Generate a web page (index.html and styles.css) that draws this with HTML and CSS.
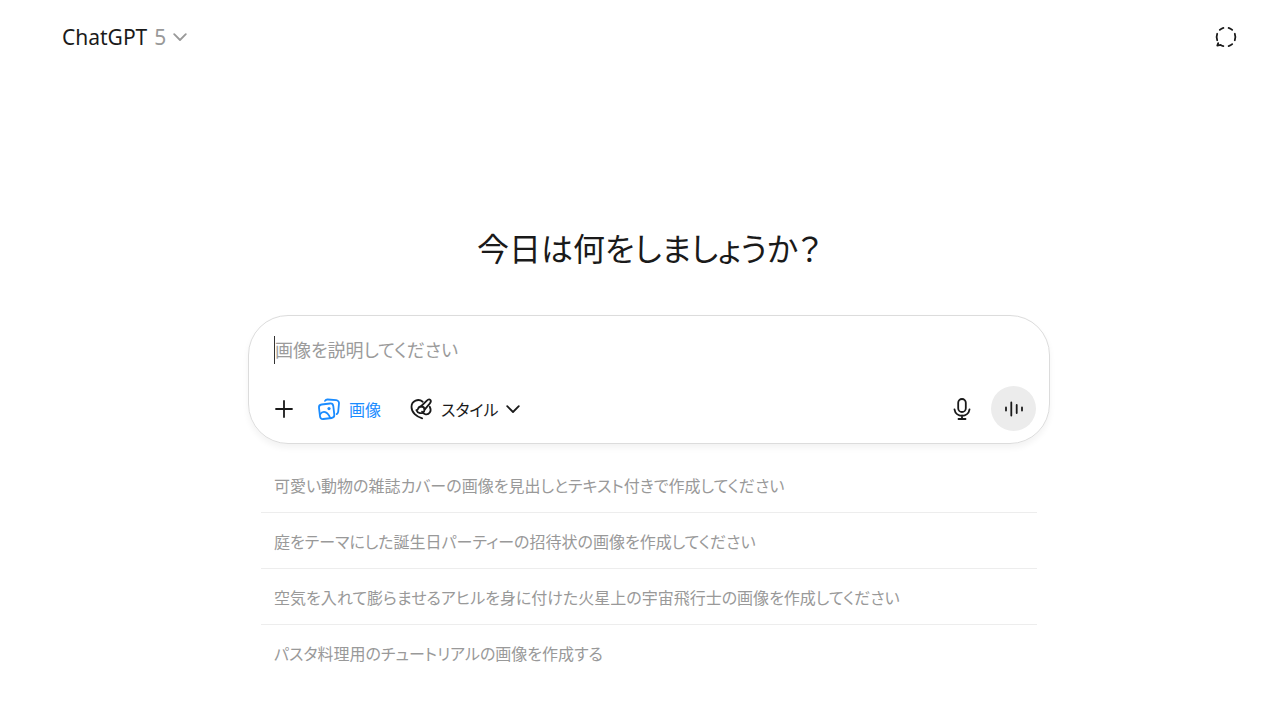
FILE: index.html
```html
<!DOCTYPE html>
<html lang="ja">
<head>
  <meta charset="UTF-8">
  <title>ChatGPT</title>
  <meta name="viewport" content="width=device-width, initial-scale=1.0">
  <link rel="stylesheet" href="styles.css">
</head>
<body>

  <header class="topbar">
    <button type="button" class="model-btn">
      <span>ChatGPT</span>
      <span class="model-version">5</span>
      <svg class="chevron" width="14" height="14" viewBox="0 0 14 14"><path d="M1.2 4.2 7 10l5.8-5.8"/></svg>
    </button>
    <button type="button" class="icon-btn" aria-label="一時チャット">
      <svg width="24" height="24" viewBox="0 0 24 24">
        <path d="M14.6 2.900a9.500 9.500 0 0 1 3.600 2M20.800 8.800a9.500 9.500 0 0 1 0 6.400M18.200 19.100a9.500 9.500 0 0 1-3.600 2M9.400 21.100a9.500 9.500 0 0 1-2.700-1.200l-3.400.7.900-2.500M3.200 15.200a9.500 9.500 0 0 1 0-6.400M5.800 4.900a9.500 9.500 0 0 1 3.600-2"/>
      </svg>
    </button>
  </header>

  <main>
    <h1>今日は何をしましょうか？</h1>

    <form class="composer">
      <div class="prompt">
        <span class="caret"></span>
        <input type="text" class="prompt-input" aria-label="画像の説明" placeholder="画像を説明してください">
      </div>
      <div class="tools">
        <button type="button" class="icon-btn" aria-label="追加">
          <svg width="18" height="18" viewBox="0 0 18 18"><path d="M9 1v16M1 9h16"/></svg>
        </button>
        <button type="button" class="tool-btn tool-image">
          <svg width="24" height="24" viewBox="0 0 24 24">
            <path d="M4.600 7.500 13 6.500a3 3 0 0 1 3.300 2.600l1 8.600a3 3 0 0 1-2.600 3.300l-8.400 1a3 3 0 0 1-3.300-2.600L2 10.800a3 3 0 0 1 2.600-3.300Z"/>
            <path d="M2.900 17.400c3-4 7.700-3.200 10.300 3.700"/>
            <path d="M8 3.900c.6-1 1.500-1.500 2.700-1.400l8.500.7a3 3 0 0 1 2.800 3.300l-.8 8.200c-.1 1.100-.6 1.900-1.500 2.400"/>
            <circle class="dot" cx="12" cy="11.600" r="1.600"/>
          </svg>
          <span>画像</span>
        </button>
        <button type="button" class="tool-btn">
          <svg width="24" height="24" viewBox="0 0 24 24">
            <path d="M13.200 21.300C7.500 19.700 2.500 15.500 2.500 9.900c0-6.400 7.100-8.700 11.200-5.200M20.800 9.800c2.300 4.500-.8 8.500-4.700 7.400-1.300-.4-2.300-1.300-3-2.600"/>
            <path d="m11.800 9.500 5.800-5.700c1.300-1.300 2.800-1.700 3.700-.9.900.9.500 2.400-.6 3.700l-5.100 6"/>
            <path d="M12 9.500c2 0 3.500 1.300 3.500 3.100 0 2.500-2.100 4-4.600 3.500-1.700-.3-2.900-1.300-3.500-2.900 1.100 0 1.500-.6 1.700-1.400.4-1.500 1.400-2.300 2.900-2.300Z"/>
          </svg>
          <span>スタイル</span>
          <svg width="14" height="14" viewBox="0 0 14 14"><path d="M1.200 4.200 7 10l5.800-5.800"/></svg>
        </button>
        <div class="voice">
          <button type="button" class="icon-btn" aria-label="音声入力">
            <svg width="22" height="24" viewBox="0 0 22 24">
              <rect x="7.200" y="2" width="7.600" height="13" rx="3.800"/>
              <path d="M3.500 12.500a7.600 7.600 0 0 0 15 0M11 18.500V22M7.500 22h7"/>
            </svg>
          </button>
          <button type="button" class="voice-btn" aria-label="音声モード">
            <svg width="20" height="20" viewBox="0 0 20 20"><path d="M2 8.500v3M7.300 3.500v13M12.700 6v8M18 8.500v3"/></svg>
          </button>
        </div>
      </div>
    </form>

    <ul class="suggestions">
      <li><button type="button">可愛い動物の雑誌カバーの画像を見出しとテキスト付きで作成してください</button></li>
      <li><button type="button">庭をテーマにした誕生日パーティーの招待状の画像を作成してください</button></li>
      <li><button type="button">空気を入れて膨らませるアヒルを身に付けた火星上の宇宙飛行士の画像を作成してください</button></li>
      <li><button type="button">パスタ料理用のチュートリアルの画像を作成する</button></li>
    </ul>
  </main>

</body>
</html>
```

FILE: styles.css
```css
* {
  box-sizing: border-box;
}

body {
  margin: 0;
  font-family: "Noto Sans", "Noto Sans CJK JP", sans-serif;
  font-feature-settings: "palt";
  background-color: #fff;
  color: #1a1a1a;
}

button,
input {
  font: inherit;
  font-feature-settings: inherit;
  color: inherit;
  background: none;
  border: none;
  padding: 0;
}

button {
  cursor: pointer;
}

svg {
  display: block;
  fill: none;
  stroke: currentColor;
  stroke-width: 1.8;
  stroke-linecap: round;
  stroke-linejoin: round;
}

.topbar {
  display: flex;
  justify-content: space-between;
  align-items: center;
  height: 73px;
  padding: 0 42px 0 62px;
}

.model-btn {
  display: flex;
  align-items: center;
  gap: 7px;
  font-size: 21px;
}

.model-version,
.chevron {
  color: #999;
}

main {
  padding: 150px 20px 0 38px;
}

h1 {
  margin: 0 0 40px;
  font-size: 32px;
  font-weight: 400;
  line-height: 52px;
  text-align: center;
}

.composer {
  max-width: 802px;
  margin: 0 auto;
  padding: 14px 13px 12px 26px;
  border: 1px solid #dcdcdc;
  border-radius: 40px;
  box-shadow: 0 4px 6px rgba(0, 0, 0, 0.05);
}

.prompt {
  position: relative;
}

.caret {
  position: absolute;
  left: -1px;
  top: 6px;
  width: 1px;
  height: 28px;
  background-color: #333;
}

.prompt-input {
  display: block;
  width: 100%;
  height: 40px;
  outline: none;
  font-size: 18px;
}

.prompt-input::placeholder {
  color: #9b9b9b;
  opacity: 1;
}

.tools {
  display: flex;
  align-items: center;
  margin-top: 16px;
  font-size: 16px;
}

.tool-btn {
  display: flex;
  align-items: center;
  gap: 8px;
  margin-left: 24px;
}

.tool-image {
  margin-right: 4px;
  color: #1a8cff;
}

.dot {
  fill: currentColor;
  stroke: none;
}

.voice {
  display: flex;
  align-items: center;
  gap: 18px;
  margin-left: auto;
}

.voice-btn {
  display: flex;
  align-items: center;
  justify-content: center;
  width: 45px;
  height: 45px;
  border-radius: 50%;
  background-color: #ececec;
}

.suggestions {
  max-width: 776px;
  margin: 13px auto 0;
  padding: 0;
  list-style: none;
}

.suggestions li + li {
  border-top: 1px solid #ededed;
}

.suggestions button {
  display: block;
  width: 100%;
  min-height: 55px;
  padding: 0 13px;
  font-size: 16px;
  color: #999;
  text-align: left;
}
```
